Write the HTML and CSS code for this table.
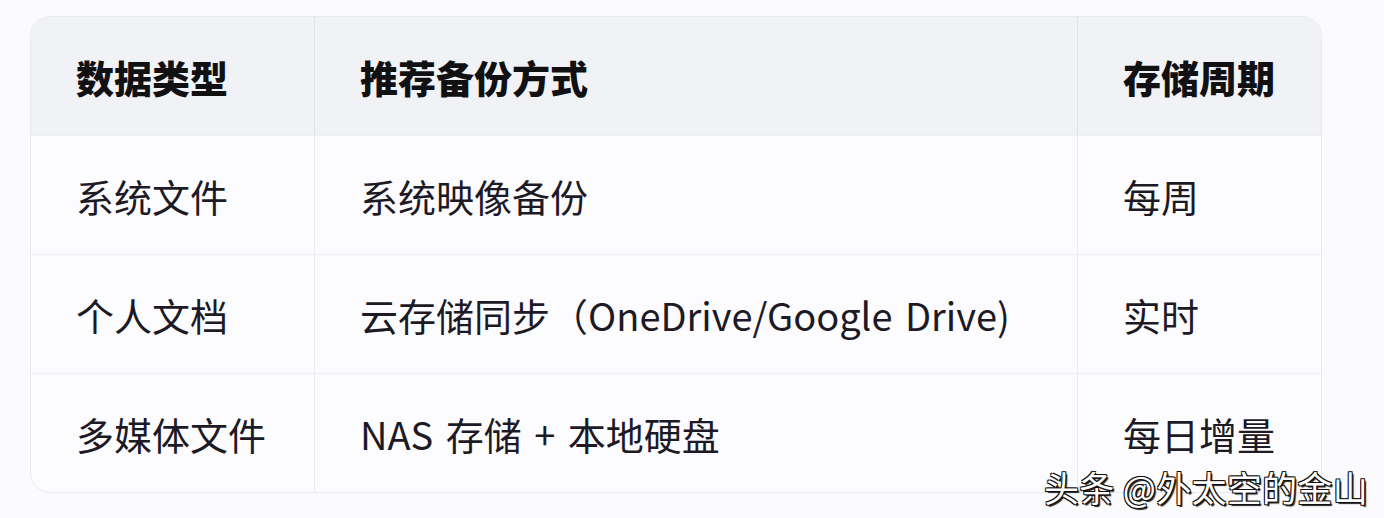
FILE: index.html
```html
<!DOCTYPE html>
<html lang="zh-CN">
<head>
<meta charset="utf-8">
<title>备份方式</title>
<link rel="stylesheet" href="styles.css">
</head>
<body>
<div class="page">
  <div class="table">
    <div class="cell head">数据类型</div>
    <div class="cell head">推荐备份方式</div>
    <div class="cell head last">存储周期</div>

    <div class="cell">系统文件</div>
    <div class="cell">系统映像备份</div>
    <div class="cell last">每周</div>

    <div class="cell">个人文档</div>
    <div class="cell">云存储同步（OneDrive/Google Drive)</div>
    <div class="cell last">实时</div>

    <div class="cell bottom">多媒体文件</div>
    <div class="cell bottom">NAS 存储 + 本地硬盘</div>
    <div class="cell bottom last">每日增量</div>
  </div>
  <div class="watermark">头条 @外太空的金山</div>
</div>
</body>
</html>
```

FILE: styles.css
```css
html, body {
  margin: 0;
  padding: 0;
  background: #fbfbfd;
}
.page {
  position: relative;
  width: 1384px;
  height: 518px;
  padding: 16px 0 0 30px;
  box-sizing: border-box;
  font-family: "Noto Sans CJK SC", "Noto Sans", sans-serif;
}
.table {
  display: grid;
  grid-template-columns: 284px 763px 245px;
  grid-template-rows: 119px 119px 119px 118px;
  width: 1292px;
  border: 1px solid #e8eaef;
  border-radius: 20px;
  overflow: hidden;
  box-sizing: border-box;
  background: #fcfcfe;
}
.cell {
  display: flex;
  align-items: center;
  padding-left: 45px;
  font-size: 38px;
  color: #1d1a26;
  border-right: 1px solid #e9ebf0;
  border-bottom: 1px solid #eceef2;
  letter-spacing: 0;
  word-spacing: 4px;
  white-space: pre;
}
.cell.last {
  border-right: none;
}
.cell.bottom {
  border-bottom: none;
}
.head {
  background: #f1f2f5;
  font-weight: 900;
  color: #111114;
  border-right-color: #dfe1e6;
  border-bottom-color: #eceef2;
}
.watermark {
  position: absolute;
  left: 1044px;
  top: 461px;
  font-size: 35px;
  letter-spacing: 0.3px;
  color: #ffffff;
  white-space: nowrap;
  text-shadow: -1px -1px 0 #111, 1px -1px 0 #111, -1px 1px 0 #111, 1px 1px 0 #111, 2px 2px 1px #222;
}
```
